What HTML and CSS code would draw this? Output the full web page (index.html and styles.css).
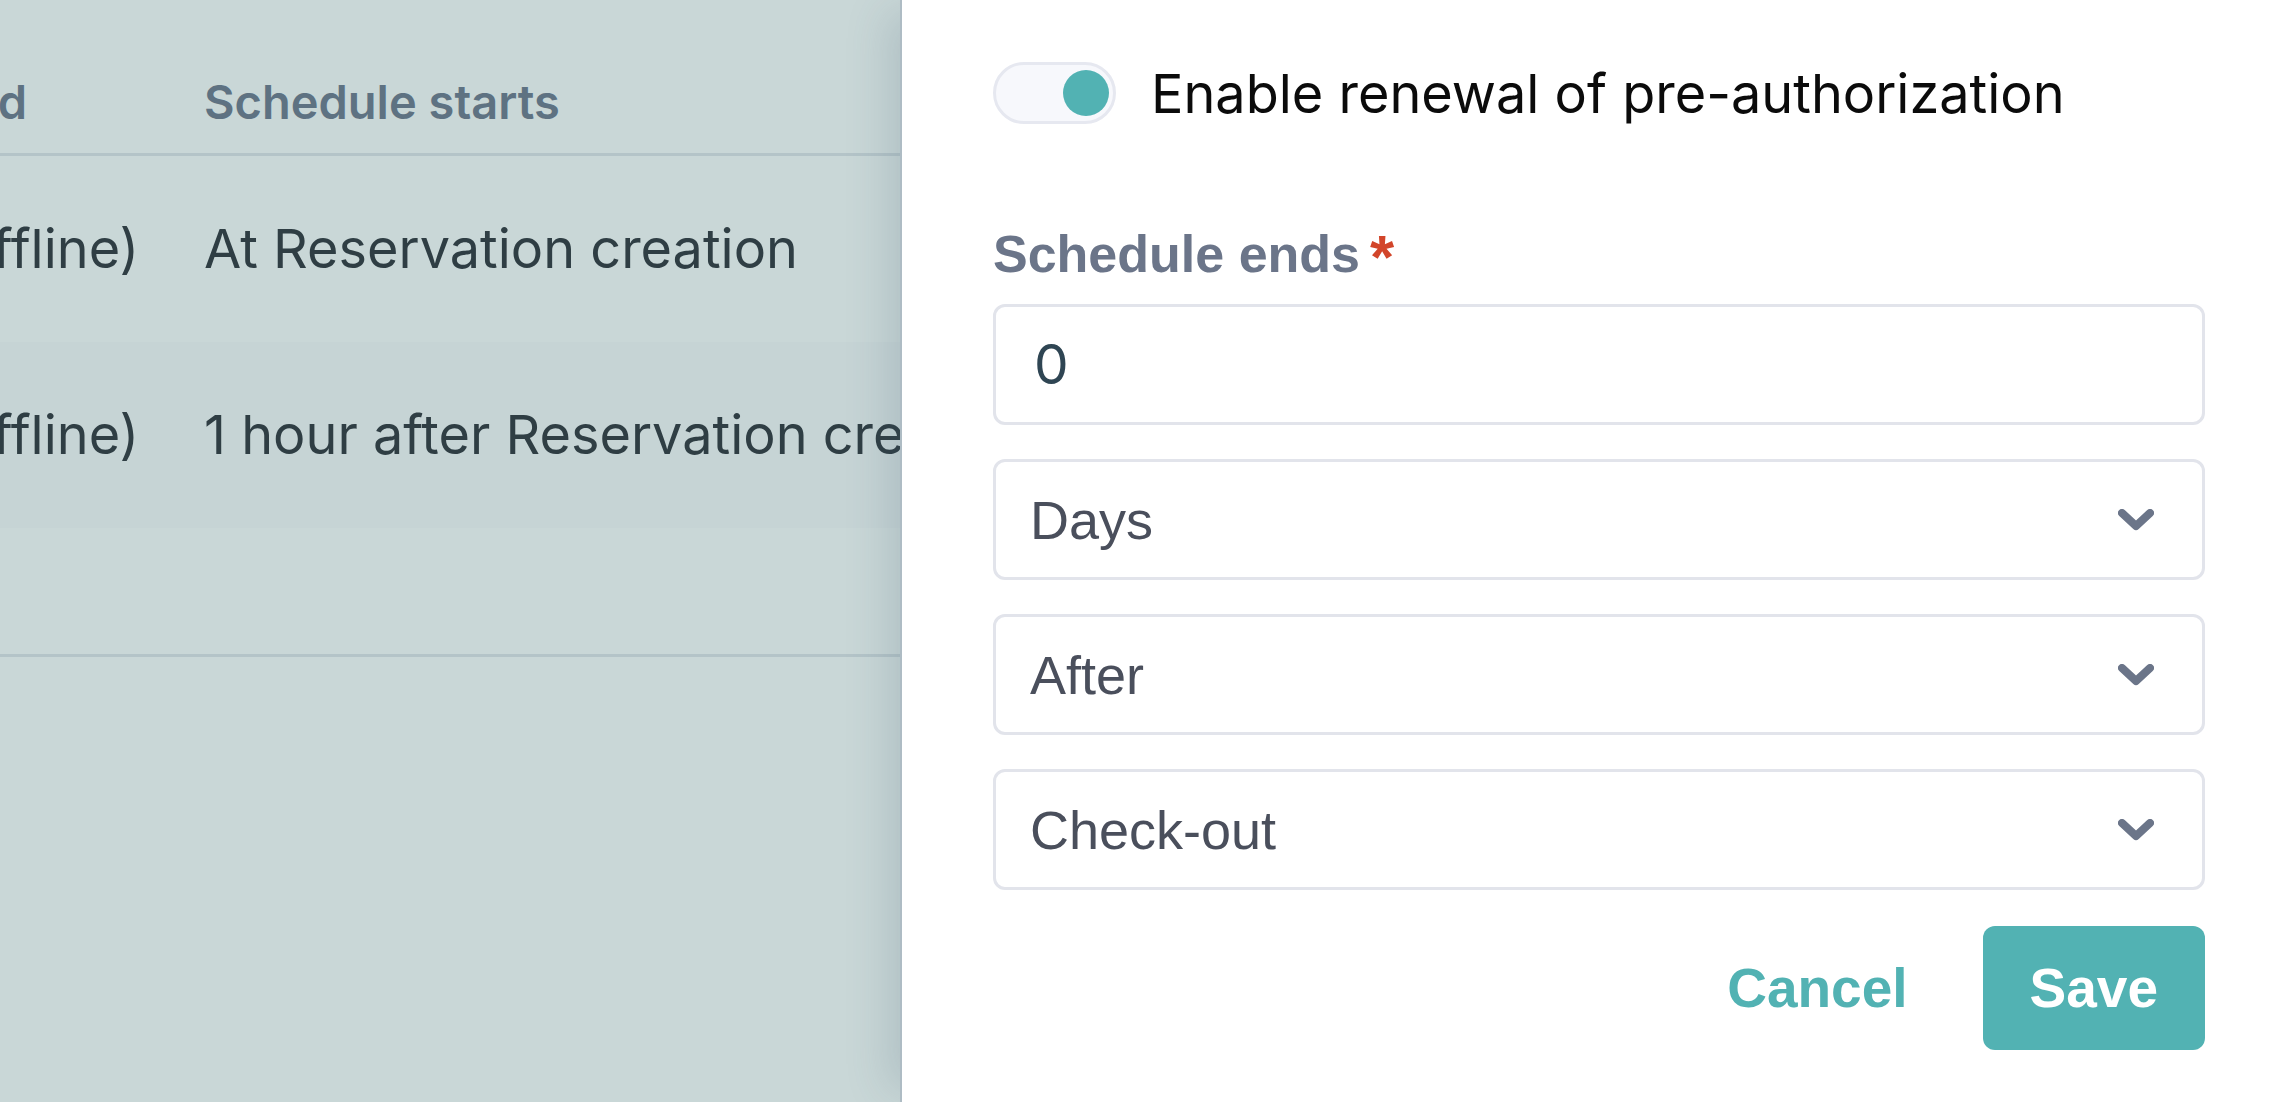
FILE: index.html
```html
<!DOCTYPE html>
<html lang="en">
<head>
<meta charset="utf-8">
<title>Schedule</title>
<link rel="stylesheet" href="styles.css">
</head>
<body>
<div class="app">
  <div class="backdrop">
    <div class="table">
      <div class="row head">
        <div class="cell c1">Capture method</div>
        <div class="cell c2">Schedule starts</div>
      </div>
      <div class="row">
        <div class="cell c1">Bank card (Offline)</div>
        <div class="cell c2">At Reservation creation</div>
      </div>
      <div class="row alt">
        <div class="cell c1">Bank card (Offline)</div>
        <div class="cell c2">1 hour after Reservation creation</div>
      </div>
      <div class="row empty"></div>
    </div>
  </div>
  <aside class="panel">
    <div class="toggle-row">
      <span class="toggle"><span class="knob"></span></span>
      <span class="toggle-label">Enable renewal of pre-authorization</span>
    </div>
    <div class="field-label">Schedule ends<span class="req">*</span></div>
    <div class="control input"><span class="value">0</span></div>
    <div class="control select">
      <span class="option">Days</span>
      <svg class="chev" width="36" height="22" viewBox="0 0 36 22"><polyline points="4,4 18,17 32,4" fill="none" stroke="#6b7589" stroke-width="8" stroke-linecap="round" stroke-linejoin="round"/></svg>
    </div>
    <div class="control select">
      <span class="option">After</span>
      <svg class="chev" width="36" height="22" viewBox="0 0 36 22"><polyline points="4,4 18,17 32,4" fill="none" stroke="#6b7589" stroke-width="8" stroke-linecap="round" stroke-linejoin="round"/></svg>
    </div>
    <div class="control select">
      <span class="option">Check-out</span>
      <svg class="chev" width="36" height="22" viewBox="0 0 36 22"><polyline points="4,4 18,17 32,4" fill="none" stroke="#6b7589" stroke-width="8" stroke-linecap="round" stroke-linejoin="round"/></svg>
    </div>
    <div class="actions">
      <button class="btn cancel">Cancel</button>
      <button class="btn save">Save</button>
    </div>
  </aside>
</div>
</body>
</html>
```
FILE: styles.css
```css
* { box-sizing: border-box; }
html, body { margin: 0; padding: 0; }
body {
  width: 2280px;
  height: 1102px;
  overflow: hidden;
  font-family: Inter, "Noto Sans", sans-serif;
  background: #ffffff;
}
.app {
  display: flex;
  width: 2280px;
  height: 1102px;
}
.backdrop {
  width: 900px;
  flex: 0 0 900px;
  height: 1102px;
  overflow: hidden;
  background: #c9d7d7;
}
.table {
  margin-left: -340px;
  width: 1400px;
}
.row {
  display: flex;
  align-items: center;
  height: 186px;
  white-space: nowrap;
}
.row.head {
  height: 156px;
  padding-top: 50px;
  border-bottom: 3px solid #b4c4c8;
}
.row.alt { background: #c6d4d5; }
.row.empty {
  height: 129px;
  border-bottom: 3px solid #b4c4c8;
}
.cell { font-size: 54px; color: #2f3e44; line-height: 1; }
.c1 { width: 544px; flex: 0 0 544px; }
.head .cell { font-size: 47px; font-weight: 600; color: #5e7282; }
.panel {
  flex: 1 1 auto;
  height: 1102px;
  background: #ffffff;
  border-left: 2px solid #aebcc4;
  box-shadow: -24px 0 40px -12px rgba(60, 90, 110, 0.18);
  padding: 62px 75px 0 91px;
}
.toggle-row {
  display: flex;
  align-items: center;
  gap: 35px;
  height: 62px;
}
.toggle {
  display: flex;
  align-items: center;
  width: 123px;
  height: 62px;
  border: 3px solid #e6e8f0;
  background: #f7f8fc;
  border-radius: 31px;
  padding-right: 4px;
  justify-content: flex-end;
}
.knob {
  width: 46px;
  height: 46px;
  border-radius: 50%;
  background: #52b2b3;
}
.toggle-label {
  font-size: 54px;
  color: #0b0b0b;
  line-height: 1;
  padding-top: 2px;
}
.field-label {
  margin-top: 100px;
  height: 60px;
  line-height: 60px;
  font-family: "Liberation Sans", Arial, sans-serif;
  font-weight: 700;
  font-size: 52px;
  color: #6b7589;
  margin-bottom: 20px;
}
.req {
  color: #d2452a;
  font-size: 62px;
  margin-left: 10px;
  vertical-align: top;
  line-height: 66px;
}
.control {
  display: flex;
  align-items: center;
  height: 121px;
  border: 3px solid #e2e4eb;
  border-radius: 12px;
  background: #ffffff;
}
.control + .control { margin-top: 34px; }
.input { padding-left: 38px; }
.value {
  font-size: 55px;
  color: #2f4553;
  line-height: 1;
}
.select {
  padding-left: 34px;
  padding-right: 48px;
  justify-content: space-between;
}
.option {
  font-family: "Liberation Sans", Arial, sans-serif;
  font-size: 54px;
  color: #4a4f5c;
  line-height: 1;
}
.actions {
  display: flex;
  justify-content: flex-end;
  gap: 28px;
  margin-top: 36px;
}
.btn {
  height: 124px;
  padding: 0 47px;
  border: none;
  border-radius: 12px;
  font-family: "Liberation Sans", Arial, sans-serif;
  font-weight: 700;
  font-size: 55px;
  cursor: pointer;
}
.cancel { background: transparent; color: #52b2b3; }
.save { background: #52b2b3; color: #ffffff; }
```
